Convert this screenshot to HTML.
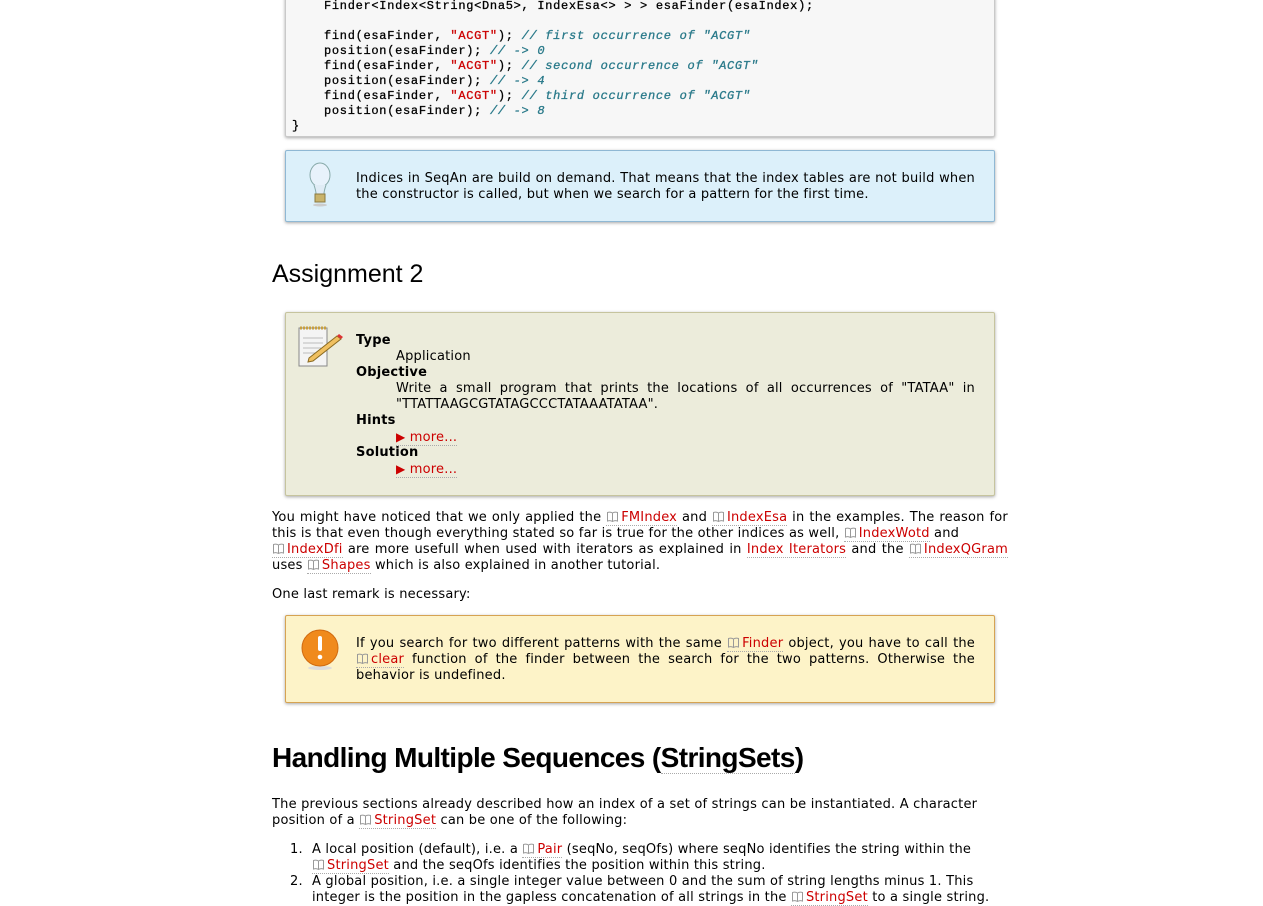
<!DOCTYPE html>
<html><head><meta charset="utf-8"><style>
body{margin:0;background:#fff;width:1263px;height:896px;overflow:hidden;position:relative;font-family:"DejaVu Sans","Liberation Sans",sans-serif;font-size:13px;letter-spacing:0.2px;color:#000}
.a{position:absolute;white-space:nowrap;line-height:16px;margin-top:1px}
.j{text-align:justify;text-align-last:justify;white-space:normal}
.box{position:absolute;left:285px;width:708px;border:1px solid;border-radius:2px;box-shadow:0 1px 3px rgba(0,0,0,.35)}
.code{font-family:"Liberation Mono",monospace;font-size:12px;line-height:15px;letter-spacing:0.7px;-webkit-text-stroke:0.3px #000}
.s{color:#c00;-webkit-text-stroke:0.3px #c00}.c{color:#2a7a8a;font-style:italic;-webkit-text-stroke:0.3px #2a7a8a}
a{color:#c00;text-decoration:none;border-bottom:1px dotted #aaa}
.bk{display:inline-block;width:13px;height:11px;vertical-align:-1px;margin-right:2px}
b{font-weight:bold}
</style></head><body>
<svg width="0" height="0" style="position:absolute"><symbol id="bk" viewBox="0 0 13 11"><path d="M6.5 2C5 1 3 1 1.5 1.5V10C3 9.5 5 9.5 6.5 10.5C8 9.5 10 9.5 11.5 10V1.5C10 1 8 1 6.5 2ZM6.5 2V10.5" fill="none" stroke="#999" stroke-width="1"/></symbol></svg>

<div class="box" style="top:-5px;height:140px;background:#f7f7f7;border-color:#c9c9c9"></div>
<div class="a code" style="left:324px;top:-2px">Finder&lt;Index&lt;String&lt;Dna5&gt;, IndexEsa&lt;&gt; &gt; &gt; esaFinder(esaIndex);</div>
<div class="a code" style="left:324px;top:28px">find(esaFinder, <span class="s">"ACGT"</span>); <span class="c">// first occurrence of "ACGT"</span></div>
<div class="a code" style="left:324px;top:43px">position(esaFinder); <span class="c">// -&gt; 0</span></div>
<div class="a code" style="left:324px;top:58px">find(esaFinder, <span class="s">"ACGT"</span>); <span class="c">// second occurrence of "ACGT"</span></div>
<div class="a code" style="left:324px;top:73px">position(esaFinder); <span class="c">// -&gt; 4</span></div>
<div class="a code" style="left:324px;top:88px">find(esaFinder, <span class="s">"ACGT"</span>); <span class="c">// third occurrence of "ACGT"</span></div>
<div class="a code" style="left:324px;top:103px">position(esaFinder); <span class="c">// -&gt; 8</span></div>
<div class="a code" style="left:292px;top:118px">}</div>

<div class="box" style="top:150px;height:70px;background:#dcf0fa;border-color:#8fb8d4"></div>
<svg class="a" style="left:303px;top:161px;margin:0" width="34" height="46" viewBox="0 0 34 46"><ellipse cx="17" cy="14" rx="10" ry="12" fill="#e8f2fb" stroke="#8aa" /><path d="M11 24Q13 30 13 33H21Q21 30 23 24" fill="#e0ecf5" stroke="#8aa"/><rect x="12" y="33" width="10" height="8" fill="#c9b36a" stroke="#8a7a40"/><ellipse cx="17" cy="44" rx="7" ry="1.5" fill="#ccc"/></svg>
<div class="a j" style="left:356px;top:170px;width:619px">Indices in SeqAn are build on demand. That means that the index tables are not build when</div>
<div class="a" style="left:356px;top:186px">the constructor is called, but when we search for a pattern for the first time.</div>

<div class="a" style="left:272px;top:258px;font-family:'Liberation Sans',sans-serif;font-size:25px;line-height:30px;letter-spacing:0">Assignment 2</div>

<div class="box" style="top:312px;height:182px;background:#ececdb;border-color:#c6c49e"></div>
<svg class="a" style="left:297px;top:324px;margin:0" width="48" height="46" viewBox="0 0 48 46"><rect x="2" y="4" width="28" height="38" fill="#f4f4f4" stroke="#888"/><path d="M3 4h26" stroke="#c8a040" stroke-width="3" stroke-dasharray="2 1"/><path d="M6 14h20M6 19h20M6 24h18M6 29h12" stroke="#bbb"/><path d="M12 34L40 12l4 3-28 22-5 1z" fill="#f0c060" stroke="#8a6a20"/><path d="M40 12l4 3 2-2-4-3z" fill="#d33"/></svg>
<div class="a" style="left:356px;top:332px"><b>Type</b></div>
<div class="a" style="left:396px;top:348px">Application</div>
<div class="a" style="left:356px;top:364px"><b>Objective</b></div>
<div class="a j" style="left:396px;top:380px;width:579px">Write a small program that prints the locations of all occurrences of "TATAA" in</div>
<div class="a" style="left:396px;top:396px">"TTATTAAGCGTATAGCCCTATAAATATAA".</div>
<div class="a" style="left:356px;top:412px"><b>Hints</b></div>
<div class="a" style="left:396px;top:428px"><a><span style="font-size:12px">&#9654;</span> more...</a></div>
<div class="a" style="left:356px;top:444px"><b>Solution</b></div>
<div class="a" style="left:396px;top:460px"><a><span style="font-size:12px">&#9654;</span> more...</a></div>

<div class="a j" style="left:272px;top:509px;width:736px">You might have noticed that we only applied the <a><svg class="bk"><use href="#bk"/></svg>FMIndex</a> and <a><svg class="bk"><use href="#bk"/></svg>IndexEsa</a> in the examples. The reason for</div>
<div class="a" style="left:272px;top:525px">this is that even though everything stated so far is true for the other indices as well, <a><svg class="bk"><use href="#bk"/></svg>IndexWotd</a> and</div>
<div class="a j" style="left:272px;top:541px;width:736px"><a><svg class="bk"><use href="#bk"/></svg>IndexDfi</a> are more usefull when used with iterators as explained in <a>Index Iterators</a> and the <a><svg class="bk"><use href="#bk"/></svg>IndexQGram</a></div>
<div class="a" style="left:272px;top:557px">uses <a><svg class="bk"><use href="#bk"/></svg>Shapes</a> which is also explained in another tutorial.</div>
<div class="a" style="left:272px;top:586px">One last remark is necessary:</div>

<div class="box" style="top:615px;height:86px;background:#fdf3c8;border-color:#d6a352"></div>
<svg class="a" style="left:300px;top:628px;margin:0" width="40" height="44" viewBox="0 0 40 44"><ellipse cx="20" cy="40" rx="12" ry="2" fill="#ddd"/><circle cx="20" cy="20" r="18" fill="#f08a1c" stroke="#d06a10"/><rect x="18" y="8" width="4" height="15" rx="2" fill="#fff"/><circle cx="20" cy="29" r="2.3" fill="#fff"/></svg>
<div class="a j" style="left:356px;top:635px;width:619px">If you search for two different patterns with the same <a><svg class="bk"><use href="#bk"/></svg>Finder</a> object, you have to call the</div>
<div class="a j" style="left:356px;top:651px;width:619px"><a><svg class="bk"><use href="#bk"/></svg>clear</a> function of the finder between the search for the two patterns. Otherwise the</div>
<div class="a" style="left:356px;top:667px">behavior is undefined.</div>

<div class="a" style="left:272px;top:740px;font-family:'Liberation Sans',sans-serif;font-size:28px;line-height:34px;font-weight:bold;letter-spacing:-0.6px">Handling Multiple Sequences (<span style="border-bottom:1px dotted #aaa">StringSets</span>)</div>

<div class="a" style="left:272px;top:796px">The previous sections already described how an index of a set of strings can be instantiated. A character</div>
<div class="a" style="left:272px;top:812px">position of a <a><svg class="bk"><use href="#bk"/></svg>StringSet</a> can be one of the following:</div>
<div class="a" style="left:290px;top:841px">1.</div>
<div class="a" style="left:312px;top:841px">A local position (default), i.e. a <a><svg class="bk"><use href="#bk"/></svg>Pair</a> (seqNo, seqOfs) where seqNo identifies the string within the</div>
<div class="a" style="left:312px;top:857px"><a><svg class="bk"><use href="#bk"/></svg>StringSet</a> and the seqOfs identifies the position within this string.</div>
<div class="a" style="left:290px;top:873px">2.</div>
<div class="a" style="left:312px;top:873px">A global position, i.e. a single integer value between 0 and the sum of string lengths minus 1. This</div>
<div class="a" style="left:312px;top:889px">integer is the position in the gapless concatenation of all strings in the <a><svg class="bk"><use href="#bk"/></svg>StringSet</a> to a single string.</div>
</body></html>
